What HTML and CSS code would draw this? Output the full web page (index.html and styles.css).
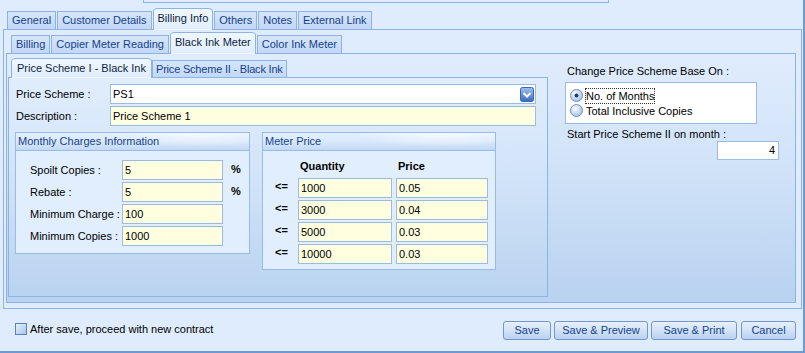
FILE: index.html
```html
<!DOCTYPE html>
<html>
<head>
<meta charset="utf-8">
<link rel="stylesheet" href="styles.css">
</head>
<body>
<div class="window">
  <div class="topbox"></div>
  <div class="tabs main-tabs">
    <div class="tab">General</div>
    <div class="tab">Customer Details</div>
    <div class="tab active">Billing Info</div>
    <div class="tab">Others</div>
    <div class="tab">Notes</div>
    <div class="tab">External Link</div>
  </div>
  <div class="main-panel">
    <div class="tabs sub-tabs">
      <div class="tab">Billing</div>
      <div class="tab">Copier Meter Reading</div>
      <div class="tab active">Black Ink Meter</div>
      <div class="tab">Color Ink Meter</div>
    </div>
    <div class="sub-panel">
      <div class="price-area">
        <div class="tabs price-tabs">
          <div class="tab active">Price Scheme I - Black Ink</div>
          <div class="tab">Price Scheme II - Black Ink</div>
        </div>
        <div class="price-panel">
          <div class="field-row">
            <span class="field-label">Price Scheme :</span>
            <div class="combo">
              <span class="combo-text">PS1</span>
              <svg class="drop" width="14" height="15" viewBox="0 0 14 15">
                <defs>
                  <linearGradient id="dg" x1="0" y1="0" x2="0" y2="1">
                    <stop offset="0" stop-color="#9dc0ee"/>
                    <stop offset="0.5" stop-color="#6c98dc"/>
                    <stop offset="1" stop-color="#3b68bd"/>
                  </linearGradient>
                </defs>
                <rect x="0.5" y="0.5" width="13" height="14" rx="2" fill="url(#dg)" stroke="#3d65ab"/>
                <path d="M3.5 6 L7 9.5 L10.5 6" fill="none" stroke="#fff" stroke-width="2"/>
              </svg>
            </div>
          </div>
          <div class="field-row">
            <span class="field-label">Description :</span>
            <div class="input yellow desc">Price Scheme 1</div>
          </div>
          <div class="groups">
            <div class="group monthly">
              <div class="group-head">Monthly Charges Information</div>
              <div class="monthly-body">
                <span class="lbl">Spoilt Copies :</span><div class="input yellow">5</div><span class="pct">%</span>
                <span class="lbl">Rebate :</span><div class="input yellow">5</div><span class="pct">%</span>
                <span class="lbl">Minimum Charge :</span><div class="input yellow">100</div><span></span>
                <span class="lbl">Minimum Copies :</span><div class="input yellow">1000</div><span></span>
              </div>
            </div>
            <div class="group meter">
              <div class="group-head">Meter Price</div>
              <div class="meter-body">
                <span></span><span class="colhead">Quantity</span><span class="colhead">Price</span>
                <span class="le">&lt;=</span><div class="input yellow">1000</div><div class="input yellow">0.05</div>
                <span class="le">&lt;=</span><div class="input yellow">3000</div><div class="input yellow">0.04</div>
                <span class="le">&lt;=</span><div class="input yellow">5000</div><div class="input yellow">0.03</div>
                <span class="le">&lt;=</span><div class="input yellow">10000</div><div class="input yellow">0.03</div>
              </div>
            </div>
          </div>
        </div>
      </div>
      <div class="side">
        <div class="side-label">Change Price Scheme Base On :</div>
        <div class="radio-box">
          <div class="radio-item">
            <svg class="radio" width="13" height="13" viewBox="0 0 13 13">
              <defs>
                <radialGradient id="rg1" cx="0.4" cy="0.35" r="0.7">
                  <stop offset="0" stop-color="#ffffff"/>
                  <stop offset="1" stop-color="#9dbde9"/>
                </radialGradient>
              </defs>
              <circle cx="6.5" cy="6.5" r="6" fill="url(#rg1)" stroke="#6e93c9"/>
              <circle cx="6.5" cy="6.5" r="2" fill="#1c3b70"/>
            </svg>
            <span class="focus">No. of Months</span>
          </div>
          <div class="radio-item">
            <svg class="radio" width="13" height="13" viewBox="0 0 13 13">
              <defs>
                <radialGradient id="rg2" cx="0.4" cy="0.35" r="0.7">
                  <stop offset="0" stop-color="#ffffff"/>
                  <stop offset="1" stop-color="#9dbde9"/>
                </radialGradient>
              </defs>
              <circle cx="6.5" cy="6.5" r="6" fill="url(#rg2)" stroke="#6e93c9"/>
            </svg>
            <span class="radio-text">Total Inclusive Copies</span>
          </div>
        </div>
        <div class="side-label start-label">Start Price Scheme II on month :</div>
        <div class="input month">4</div>
      </div>
    </div>
  </div>
  <div class="bottom-bar">
    <div class="check-wrap">
      <span class="checkbox"></span>
      <span>After save, proceed with new contract</span>
    </div>
    <div class="buttons">
      <div class="btn b-save">Save</div>
      <div class="btn b-preview">Save &amp; Preview</div>
      <div class="btn b-print">Save &amp; Print</div>
      <div class="btn b-cancel">Cancel</div>
    </div>
  </div>
</div>
</body>
</html>
```
FILE: styles.css
```css
* { box-sizing: border-box; }
html, body { margin: 0; padding: 0; }
body {
  width: 805px;
  height: 353px;
  overflow: hidden;
  background: #dfecfd;
  font-family: "Liberation Sans", Arial, sans-serif;
  font-size: 11px;
  color: #000;
}
.window {
  width: 805px;
  height: 353px;
  border-right: 2px solid #6b9bd6;
  border-bottom: 2px solid #6b9bd6;
  background: #dfecfd;
}
.topbox {
  margin-left: 143px;
  width: 466px;
  height: 3px;
  border: 1px solid #8db2e3;
  border-top: none;
}

/* tabs */
.tabs {
  display: flex;
  align-items: flex-end;
  gap: 1px;
  position: relative;
  z-index: 2;
  margin-bottom: -1px;
}
.tab {
  height: 19px;
  border: 1px solid #8db2e3;
  padding: 0 4px;
  line-height: 17px;
  color: #15428b;
  white-space: nowrap;
  background: linear-gradient(#d6e6fa, #c2d8f5);
}
.tab.active {
  height: 22px;
  border-bottom-color: transparent;
  border-radius: 5px 5px 0 0 / 3px 3px 0 0;
  background: linear-gradient(#f0f7ff, #e1eefd);
  color: #0c1f3d;
  line-height: 19px;
}
.main-tabs { margin-top: 5px; height: 22px; padding-left: 7px; }
.sub-tabs { margin-top: 2px; height: 22px; padding-left: 7px; }
.price-tabs { height: 20px; padding-left: 3px; gap: 0; }
.price-tabs .tab { height: 18px; line-height: 16px; padding: 0 3px; letter-spacing: -0.2px; }
.price-tabs .tab.active { height: 20px; line-height: 18px; padding: 0 5px; letter-spacing: 0; }

.main-panel {
  margin-left: 3px;
  width: 799px;
  height: 280px;
  border: 1px solid #8db2e3;
  background: #dfecfd;
}
.sub-panel {
  margin-left: 2px;
  width: 790px;
  height: 250px;
  border: 1px solid #8db2e3;
  background: linear-gradient(#dfecfd 0%, #d3e4f9 40%, #b8d2f0 100%);
  display: flex;
  padding-top: 4px;
}
.price-area {
  margin-left: 1px;
  width: 540px;
}
.price-panel {
  width: 540px;
  height: 220px;
  border: 1px solid #8db2e3;
  background: linear-gradient(#e0edfd 0%, #d4e5f9 40%, #b9d3f0 100%);
  padding: 6px 0 0 7px;
}
.field-row {
  display: flex;
  align-items: center;
  height: 20px;
  margin-bottom: 2px;
}
.field-label { width: 94px; }
.input {
  height: 20px;
  border: 1px solid #9bbbe5;
  background: #fff;
  padding: 0 2px;
  line-height: 18px;
  white-space: nowrap;
}
.input.yellow { background: #ffffe0; }
.combo {
  width: 426px;
  height: 20px;
  border: 1px solid #9bbbe5;
  background: #fff;
  display: flex;
  align-items: center;
  justify-content: space-between;
  padding: 0 1px 0 2px;
}
.drop { display: block; }
.desc { width: 426px; }

.groups {
  display: flex;
  align-items: flex-start;
  margin-top: 6px;
  margin-left: -1px;
}
.group {
  border: 1px solid #99bbe8;
  background: #e1eefd;
}
.group-head {
  height: 18px;
  border-bottom: 1px solid #99bbe8;
  padding-left: 2px;
  line-height: 17px;
  color: #15428b;
  background:
    radial-gradient(ellipse 90px 14px at 78% 0%, rgba(255,255,255,0.7), rgba(255,255,255,0) 100%),
    linear-gradient(#e4f0fe 0%, #d7e7fb 55%, #c3d9f4 100%);
}
.monthly { width: 235px; height: 122px; }
.meter { width: 234px; height: 138px; margin-left: 12px; }

.monthly-body {
  display: grid;
  grid-template-columns: 92px 101px 26px;
  grid-auto-rows: 20px;
  row-gap: 2px;
  padding: 9px 0 0 14px;
  align-items: center;
}
.pct { font-weight: bold; padding-left: 8px; margin-top: -3px; }

.meter-body {
  display: grid;
  grid-template-columns: 31px 94px 92px;
  column-gap: 4px;
  grid-template-rows: 20px repeat(4, 20px);
  row-gap: 2px;
  padding-top: 5px;
  align-items: center;
}
.colhead { font-weight: bold; padding-left: 2px; }
.le { font-weight: bold; padding-left: 12px; margin-top: -4px; }

/* side */
.side {
  margin-left: 17px;
  padding-top: 7px;
}
.side-label { line-height: 13px; padding-left: 2px; }
.radio-box {
  margin-top: 4px;
  width: 192px;
  height: 42px;
  border: 1px solid #9bbbe5;
  background: #fff;
  padding: 5px 0 0 4px;
}
.radio-item {
  display: flex;
  align-items: center;
  height: 15px;
}
.radio { display: block; margin-right: 3px; }
.focus { outline: 1px dotted #333; line-height: 14px; }
.start-label { margin-top: 4px; }
.month {
  margin-left: 152px;
  width: 62px;
  height: 19px;
  text-align: right;
  padding-right: 3px;
  line-height: 17px;
}

/* bottom */
.bottom-bar {
  height: 42px;
  display: flex;
  align-items: center;
  justify-content: space-between;
  padding: 0 7px 0 15px;
}
.check-wrap { display: flex; align-items: center; margin-top: -2px; }
.checkbox {
  width: 12px;
  height: 12px;
  border: 1px solid #5b81ba;
  background: linear-gradient(135deg, #e6effb, #aac6ec);
  margin-right: 3px;
}
.buttons { display: flex; gap: 3px; margin-top: 1px; }
.btn {
  height: 19px;
  border: 1px solid #7596c9;
  border-radius: 3px;
  background: linear-gradient(#e7f0fb 0%, #d2e2f7 50%, #b9d1f0 100%);
  color: #15428b;
  text-align: center;
  line-height: 17px;
}
.b-save { width: 48px; }
.b-preview { width: 94px; }
.b-print { width: 86px; }
.b-cancel { width: 55px; margin-left: 1px; }
```
